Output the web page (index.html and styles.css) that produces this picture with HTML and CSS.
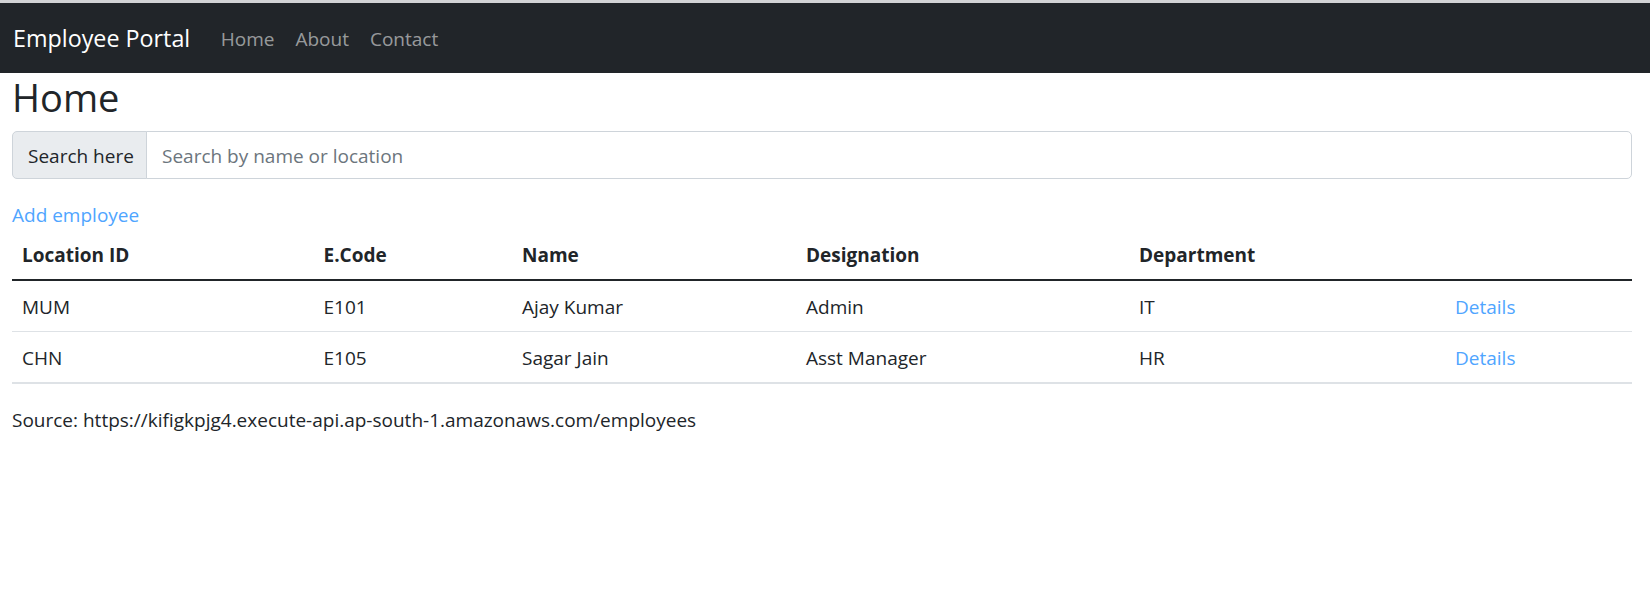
FILE: index.html
```html
<!DOCTYPE html>
<html lang="en">
<head>
<meta charset="utf-8">
<title>Employee Portal</title>
<link rel="stylesheet" href="styles.css">
</head>
<body>
<nav class="navbar">
  <a class="brand" href="#">Employee Portal</a>
  <ul class="nav">
    <li><a class="nav-link" href="#">Home</a></li>
    <li><a class="nav-link" href="#">About</a></li>
    <li><a class="nav-link" href="#">Contact</a></li>
  </ul>
</nav>
<main class="content">
  <h1 class="title">Home</h1>
  <div class="input-group">
    <span class="input-label">Search here</span>
    <input class="input" type="text" placeholder="Search by name or location">
  </div>
  <div class="add-row"><a class="link" href="#">Add employee</a></div>
  <table class="table">
    <colgroup>
      <col class="c1"><col class="c2"><col class="c3"><col class="c4"><col class="c5"><col class="c6">
    </colgroup>
    <thead>
      <tr><th>Location ID</th><th>E.Code</th><th>Name</th><th>Designation</th><th>Department</th><th></th></tr>
    </thead>
    <tbody>
      <tr><td>MUM</td><td>E101</td><td>Ajay Kumar</td><td>Admin</td><td>IT</td><td><a class="link" href="#">Details</a></td></tr>
      <tr><td>CHN</td><td>E105</td><td>Sagar Jain</td><td>Asst Manager</td><td>HR</td><td><a class="link" href="#">Details</a></td></tr>
    </tbody>
  </table>
  <p class="source">Source: https://kifigkpjg4.execute-api.ap-south-1.amazonaws.com/employees</p>
</main>
</body>
</html>
```
FILE: styles.css
```css
* { box-sizing: border-box; }
html, body { margin: 0; padding: 0; }
body {
  border-top: 3px solid #d2d3d5;
  font-family: "Open Sans", "Noto Sans", sans-serif;
  font-size: 19px;
  line-height: 30px;
  color: #212529;
  background: #fff;
}
.navbar {
  display: flex;
  align-items: center;
  height: 70px;
  padding: 10px 13px;
  background: #212529;
}
.brand {
  font-size: 23.3px;
  line-height: 37.5px;
  padding: 7.25px 0 5.25px;
  margin-right: 20px;
  color: #fff;
  text-decoration: none;
}
.nav {
  display: flex;
  list-style: none;
  margin: 0;
  padding: 0;
}
.nav-link {
  display: block;
  padding: 11px 10.5px 9px 10.5px;
  color: rgba(255, 255, 255, 0.55);
  text-decoration: none;
}
.content {
  padding: 0 18px 0 12px;
}
.title {
  margin: 0 0 10px;
  font-size: 38px;
  line-height: 48px;
  font-weight: 500;
}
.input-group {
  display: flex;
  height: 47.5px;
  margin-bottom: 20px;
}
.input-label {
  display: flex;
  align-items: center;
  width: 135px;
  padding: 2px 15px 0;
  background: #e9ecef;
  border: 1px solid #ced4da;
  border-radius: 5px 0 0 5px;
  white-space: nowrap;
  color: #212529;
}
.input {
  flex: 1;
  min-width: 0;
  margin-left: -1px;
  padding: 2px 15px 0;
  border: 1px solid #ced4da;
  border-radius: 0 5px 5px 0;
  font-family: inherit;
  font-size: 19px;
  color: #212529;
  background: #fff;
  outline: none;
}
.input::placeholder { color: #6c757d; }
.add-row {
  height: 30px;
  padding-top: 1px;
}
.link {
  color: #4fa5ff;
  text-decoration: none;
}
.table {
  width: 100%;
  table-layout: fixed;
  border-collapse: collapse;
  margin-bottom: 20px;
}
.c1 { width: 301.5px; }
.c2 { width: 198.5px; }
.c3 { width: 284px; }
.c4 { width: 333px; }
.c5 { width: 316px; }
.c6 { width: auto; }
.table th {
  text-align: left;
  font-weight: 700;
  padding: 11px 10px 9px;
  line-height: 30px;
  border-bottom: 2px solid #212529;
}
.table td {
  padding: 11px 10px 9px;
  line-height: 30px;
  border-bottom: 1px solid #dee2e6;
}
.table tbody tr:last-child td {
  border-bottom: 2px solid #dee2e6;
}
.source {
  margin: 0;
  padding-top: 1px;
}
```
